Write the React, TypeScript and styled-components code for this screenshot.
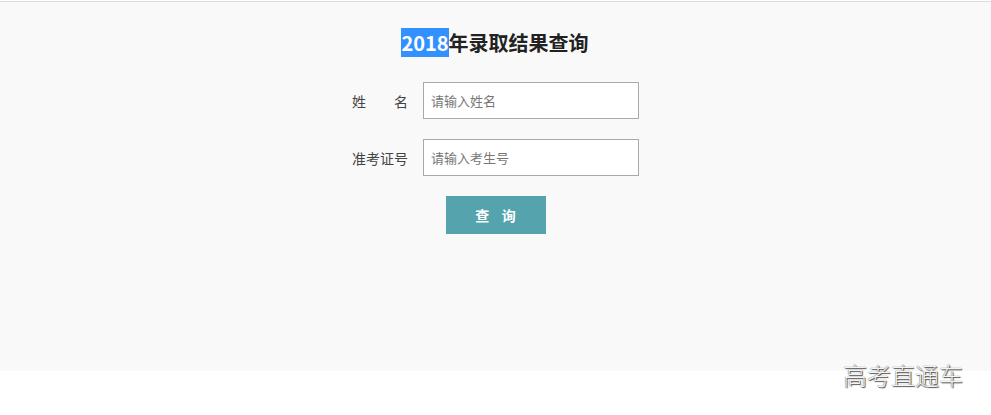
import React from "react";
import styled, { createGlobalStyle } from "styled-components";

const GlobalStyle = createGlobalStyle`
  html, body {
    margin: 0;
    padding: 0;
    background: #fff;
  }
  body {
    font-family: "Noto Sans CJK SC", "Noto Sans", sans-serif;
  }
`;

const FIELDS = [
  { id: "name", label: "姓名", placeholder: "请输入姓名" },
  { id: "exam", label: "准考证号", placeholder: "请输入考生号" },
];

function App() {
  return (
    <Page>
      <GlobalStyle />
      <Panel>
        <Title>
          <Picked>2018</Picked>年录取结果查询
        </Title>
        <Form>
          {FIELDS.map((f) => (
            <Row key={f.id}>
              <Label>{f.label}</Label>
              <Input placeholder={f.placeholder} />
            </Row>
          ))}
          <Button>查&nbsp;&nbsp;&nbsp;&nbsp;询</Button>
        </Form>
      </Panel>
      <Watermark>高考直通车</Watermark>
    </Page>
  );
}

export default App;

const Page = styled.div`
  position: relative;
  height: 415px;
  padding-top: 1px;
  box-sizing: border-box;
`;

const Panel = styled.div`
  height: 370px;
  box-sizing: border-box;
  border-top: 1px solid #dcdcdc;
  background: #f9f9f9;
  display: flex;
  flex-direction: column;
  align-items: center;
  padding-top: 28px;
`;

const Title = styled.h1`
  margin: 0 0 0 -1px;
  font-size: 20px;
  line-height: 26px;
  font-weight: bold;
  color: #222;
`;

const Picked = styled.span`
  background: #3390ff;
  color: #fff;
`;

const Form = styled.div`
  margin-top: 26px;
  display: flex;
  flex-direction: column;
  align-items: center;
  gap: 20px;
`;

const Row = styled.div`
  display: flex;
  align-items: center;
  gap: 15px;
`;

const Label = styled.label`
  width: 56px;
  font-size: 14px;
  color: #444;
  text-align: justify;
  text-align-last: justify;
`;

const Input = styled.input`
  width: 216px;
  height: 37px;
  box-sizing: border-box;
  border: 1px solid #a9a9a9;
  background: #fff;
  padding: 0 7px;
  font-family: "Noto Sans CJK SC", sans-serif;
  font-size: 13px;
  outline: none;
  &::placeholder {
    color: #777;
  }
`;

const Button = styled.button`
  width: 100px;
  height: 38px;
  border: none;
  background: #55a3ad;
  color: #fff;
  font-family: "Noto Sans CJK SC", sans-serif;
  font-size: 14px;
  font-weight: bold;
  cursor: pointer;
`;

const Watermark = styled.div`
  position: absolute;
  right: 28px;
  top: 357px;
  font-size: 24px;
  color: #f4f4f4;
  text-shadow: 0 0 1px #333, 1px 1px 1px #555;
  font-weight: 300;
`;
